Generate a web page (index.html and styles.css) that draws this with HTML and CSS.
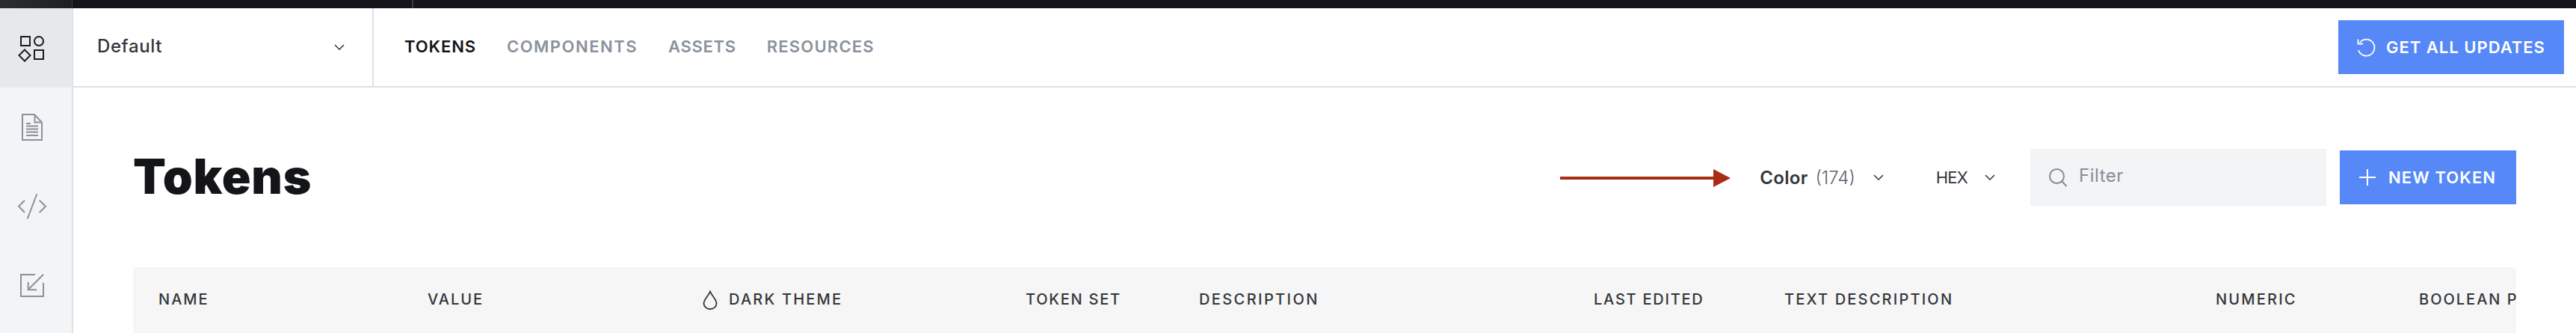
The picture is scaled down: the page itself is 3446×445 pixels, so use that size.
FILE: index.html
```html
<!DOCTYPE html>
<html lang="en">
<head>
<meta charset="utf-8">
<title>Tokens</title>
<link rel="stylesheet" href="styles.css">
</head>
<body>
<div class="topbar"><span class="topbar-side"></span><span class="topbar-gap"></span></div>
<div class="app">
  <nav class="sidebar">
    <a class="side-item active">
      <svg class="side-icon" width="48" height="48" viewBox="0 0 48 48"><g fill="none" stroke="#1b1c1f" stroke-width="2"><rect x="4" y="9" width="12" height="12"/><circle cx="28" cy="15" r="6"/><path d="M9 26.500l7.500 7.500L9 41.500 1.500 34z"/><rect x="22" y="27" width="12" height="12"/></g></svg>
    </a>
    <a class="side-item">
      <svg class="side-icon" width="48" height="48" viewBox="0 0 48 48"><g fill="none" stroke="#8a929c" stroke-width="2"><path d="M6 7h16l10 10.500V41H6z"/><path d="M22.500 7v10.500H32"/><path d="M11 19h6M11 22.500h16M11 26.500h16M11 30.500h16M11 35h16"/></g></svg>
    </a>
    <a class="side-item">
      <svg class="side-icon" width="48" height="48" viewBox="0 0 48 48"><g fill="none" stroke="#8a929c" stroke-width="2"><path d="M9 15.700L1 23.700 9 32"/><path d="M25 8L13 39.700" stroke-linecap="round"/><path d="M28.700 15.700l8.300 8-8.300 8.300"/></g></svg>
    </a>
    <a class="side-item">
      <svg class="side-icon" width="48" height="48" viewBox="0 0 48 48"><g fill="none" stroke="#8a929c" stroke-width="2"><path d="M23 9H4v29h30V20"/><path d="M34 8.700L13.700 29M13.700 18.700V29.300H25"/></g></svg>
    </a>
  </nav>
  <main class="main">
    <header class="header">
      <div class="selector">
        <span class="selector-label">Default</span>
        <svg class="chevron" width="14" height="8" viewBox="0 0 14 8"><path d="M1 1l6 6 6-6" fill="none" stroke="#33363b" stroke-width="1.500"/></svg>
      </div>
      <div class="tabs">
        <a class="tab tab-active t-tokens">TOKENS</a>
        <a class="tab t-components">COMPONENTS</a>
        <a class="tab t-assets">ASSETS</a>
        <a class="tab t-resources">RESOURCES</a>
      </div>
      <button class="btn btn-updates">
        <svg width="26" height="26" viewBox="0 0 26 26"><g fill="none" stroke="#fff" stroke-width="1.800"><path d="M5 6.500A11 11 0 1 1 3 17"/><path d="M2.500 2.500v6h6.500"/></g></svg>
        <span class="btn-label l-updates">GET ALL UPDATES</span>
      </button>
    </header>
    <section class="title-row">
      <h1 class="title">Tokens</h1>
      <div class="toolbar">
        <svg class="arrow" width="228" height="24" viewBox="0 0 228 24"><path d="M0 10h205V0l23 12-23 12V14H0z" fill="#a82c16"/></svg>
        <div class="dropdown d-color">
          <span class="dd-strong">Color</span>
          <span class="dd-count">(174)</span>
          <svg class="chevron" width="14" height="8" viewBox="0 0 14 8"><path d="M1 1l6 6 6-6" fill="none" stroke="#33363b" stroke-width="1.500"/></svg>
        </div>
        <div class="dropdown d-hex">
          <span class="dd-plain">HEX</span>
          <svg class="chevron" width="14" height="8" viewBox="0 0 14 8"><path d="M1 1l6 6 6-6" fill="none" stroke="#33363b" stroke-width="1.500"/></svg>
        </div>
        <div class="filter">
          <svg width="26" height="26" viewBox="0 0 26 26"><g fill="none" stroke="#868c93" stroke-width="2"><circle cx="11.500" cy="11.500" r="9.500"/><path d="M18.500 18.500l6 6.500"/></g></svg>
          <span class="filter-text">Filter</span>
        </div>
        <button class="btn btn-new">
          <svg width="24" height="24" viewBox="0 0 24 24"><path d="M12 1v22M1 12h22" stroke="#fff" stroke-width="2"/></svg>
          <span class="btn-label l-new">NEW TOKEN</span>
        </button>
      </div>
    </section>
    <div class="table-head">
      <span class="col c-name"><span class="h">NAME</span></span>
      <span class="col c-value"><span class="h">VALUE</span></span>
      <span class="col c-dark">
        <svg width="20" height="26" viewBox="0 0 20 26"><path d="M10 1.500C8 7 1.500 12 1.500 17.500a8.500 7.500 0 0 0 17 0C18.500 12 12 7 10 1.500z" fill="none" stroke="#33363b" stroke-width="1.800"/></svg>
        <span class="h h-wide">DARK THEME</span>
      </span>
      <span class="col c-set"><span class="h h-tight">TOKEN SET</span></span>
      <span class="col c-desc"><span class="h h-wider">DESCRIPTION</span></span>
      <span class="col c-edit"><span class="h h-tight">LAST EDITED</span></span>
      <span class="col c-text"><span class="h h-wide">TEXT DESCRIPTION</span></span>
      <span class="col c-num"><span class="h h-wide">NUMERIC</span></span>
      <span class="col c-bool"><span class="h">BOOLEAN PROPERTY</span></span>
    </div>
  </main>
</div>
</body>
</html>
```

FILE: styles.css
```css
* { box-sizing: border-box; }
html, body { margin: 0; height: 100%; overflow: hidden; background: #fff; }
body { font-family: "Inter", "Liberation Sans", sans-serif; display: flex; flex-direction: column; color: #33363b; }

.topbar { height: 11px; flex: none; background: #141518; display: flex; }
.topbar-side { width: 97px; background: linear-gradient(90deg, #2b2d30, #1d1f22); border-right: 1px solid #3a3b3e; }
.topbar-gap { width: 456px; border-right: 2px solid #3a3b3e; }

.app { flex: 1; display: flex; min-height: 0; }
.sidebar { width: 98px; flex: none; background: #f2f4f6; border-right: 2px solid #dde0e4; display: flex; flex-direction: column; }
.side-item { height: 106px; flex: none; display: flex; align-items: center; justify-content: center; }
.side-item.active { background: #e7e8ea; }
.side-icon { display: block; }

.main { flex: 1; min-width: 0; display: flex; flex-direction: column; }
.header { height: 106px; flex: none; display: flex; align-items: center; border-bottom: 2px solid #dde0e4; padding-right: 16px; }
.selector { width: 402px; height: 100%; flex: none; display: flex; align-items: center; justify-content: space-between; padding: 0 37px 0 32px; border-right: 2px solid #dde0e4; }
.selector-label { font-size: 24px; font-weight: 500; letter-spacing: 0.6px; color: #33363b; margin-top: -3px; }
.chevron { display: block; flex: none; }

.tabs { display: flex; align-items: center; gap: 41px; padding-left: 41px; flex: 1; margin-top: -2px; }
.tab { font-size: 22px; font-weight: 600; color: #8a929c; }
.tab-active { color: #141518; }
.t-tokens { letter-spacing: 0.9px; }
.t-components { letter-spacing: 1.5px; }
.t-assets { letter-spacing: 0.7px; }
.t-resources { letter-spacing: 1.2px; }

.btn { border: 0; background: #5688f8; color: #fff; display: flex; align-items: center; font-family: inherit; padding: 0; }
.btn-label { font-size: 22px; font-weight: 600; color: #fff; }
.l-updates { letter-spacing: 1px; margin-top: -1px; }
.l-new { letter-spacing: 1.1px; }
.btn-updates { width: 302px; height: 72px; padding-left: 24px; gap: 14px; }
.btn-new { width: 236px; height: 72px; padding-left: 25px; gap: 16px; margin-left: 18px; }

.title-row { height: 240px; flex: none; display: flex; align-items: center; justify-content: space-between; padding: 0 80px; }
.title { margin: 0 0 3px; font-size: 64px; font-weight: 900; letter-spacing: 0.8px; color: #141518; line-height: 1; }
.toolbar { display: flex; align-items: center; }
.arrow { display: block; margin-top: 1px; }
.dropdown { display: flex; align-items: center; }
.d-color { margin-left: 39px; }
.d-hex { margin-left: 70px; }
.dd-strong { font-size: 24px; font-weight: 600; letter-spacing: 0.3px; color: #33363b; }
.dd-count { font-size: 24px; font-weight: 300; color: #5f646c; margin-left: 10px; }
.dd-plain { font-size: 22px; letter-spacing: -0.8px; color: #33363b; }
.d-color .chevron { margin-left: 24px; }
.d-hex .chevron { margin-left: 23px; }
.filter { width: 396px; height: 76px; margin-left: 47px; background: #f2f4f5; display: flex; align-items: center; padding-left: 24px; gap: 15px; }
.filter-text { font-size: 24px; letter-spacing: 0.5px; color: #878d94; margin-top: -6px; }

.table-head { height: 88px; flex: none; margin: 0 80px; background: #f6f6f6; display: flex; align-items: center; overflow: hidden; padding-left: 34px; }
.col { flex: none; display: flex; align-items: center; white-space: nowrap; }
.h { font-size: 20px; font-weight: 500; letter-spacing: 2px; color: #33363b; margin-top: -2px; }
.h-tight { letter-spacing: 1.75px; }
.h-wide { letter-spacing: 2.2px; }
.h-wider { letter-spacing: 2.4px; }
.c-name { width: 360px; }
.c-value { width: 368px; }
.c-dark { width: 432px; gap: 15px; }
.c-set { width: 232px; }
.c-desc { width: 528px; }
.c-edit { width: 255px; }
.c-text { width: 577px; }
.c-num { width: 272px; }
```
